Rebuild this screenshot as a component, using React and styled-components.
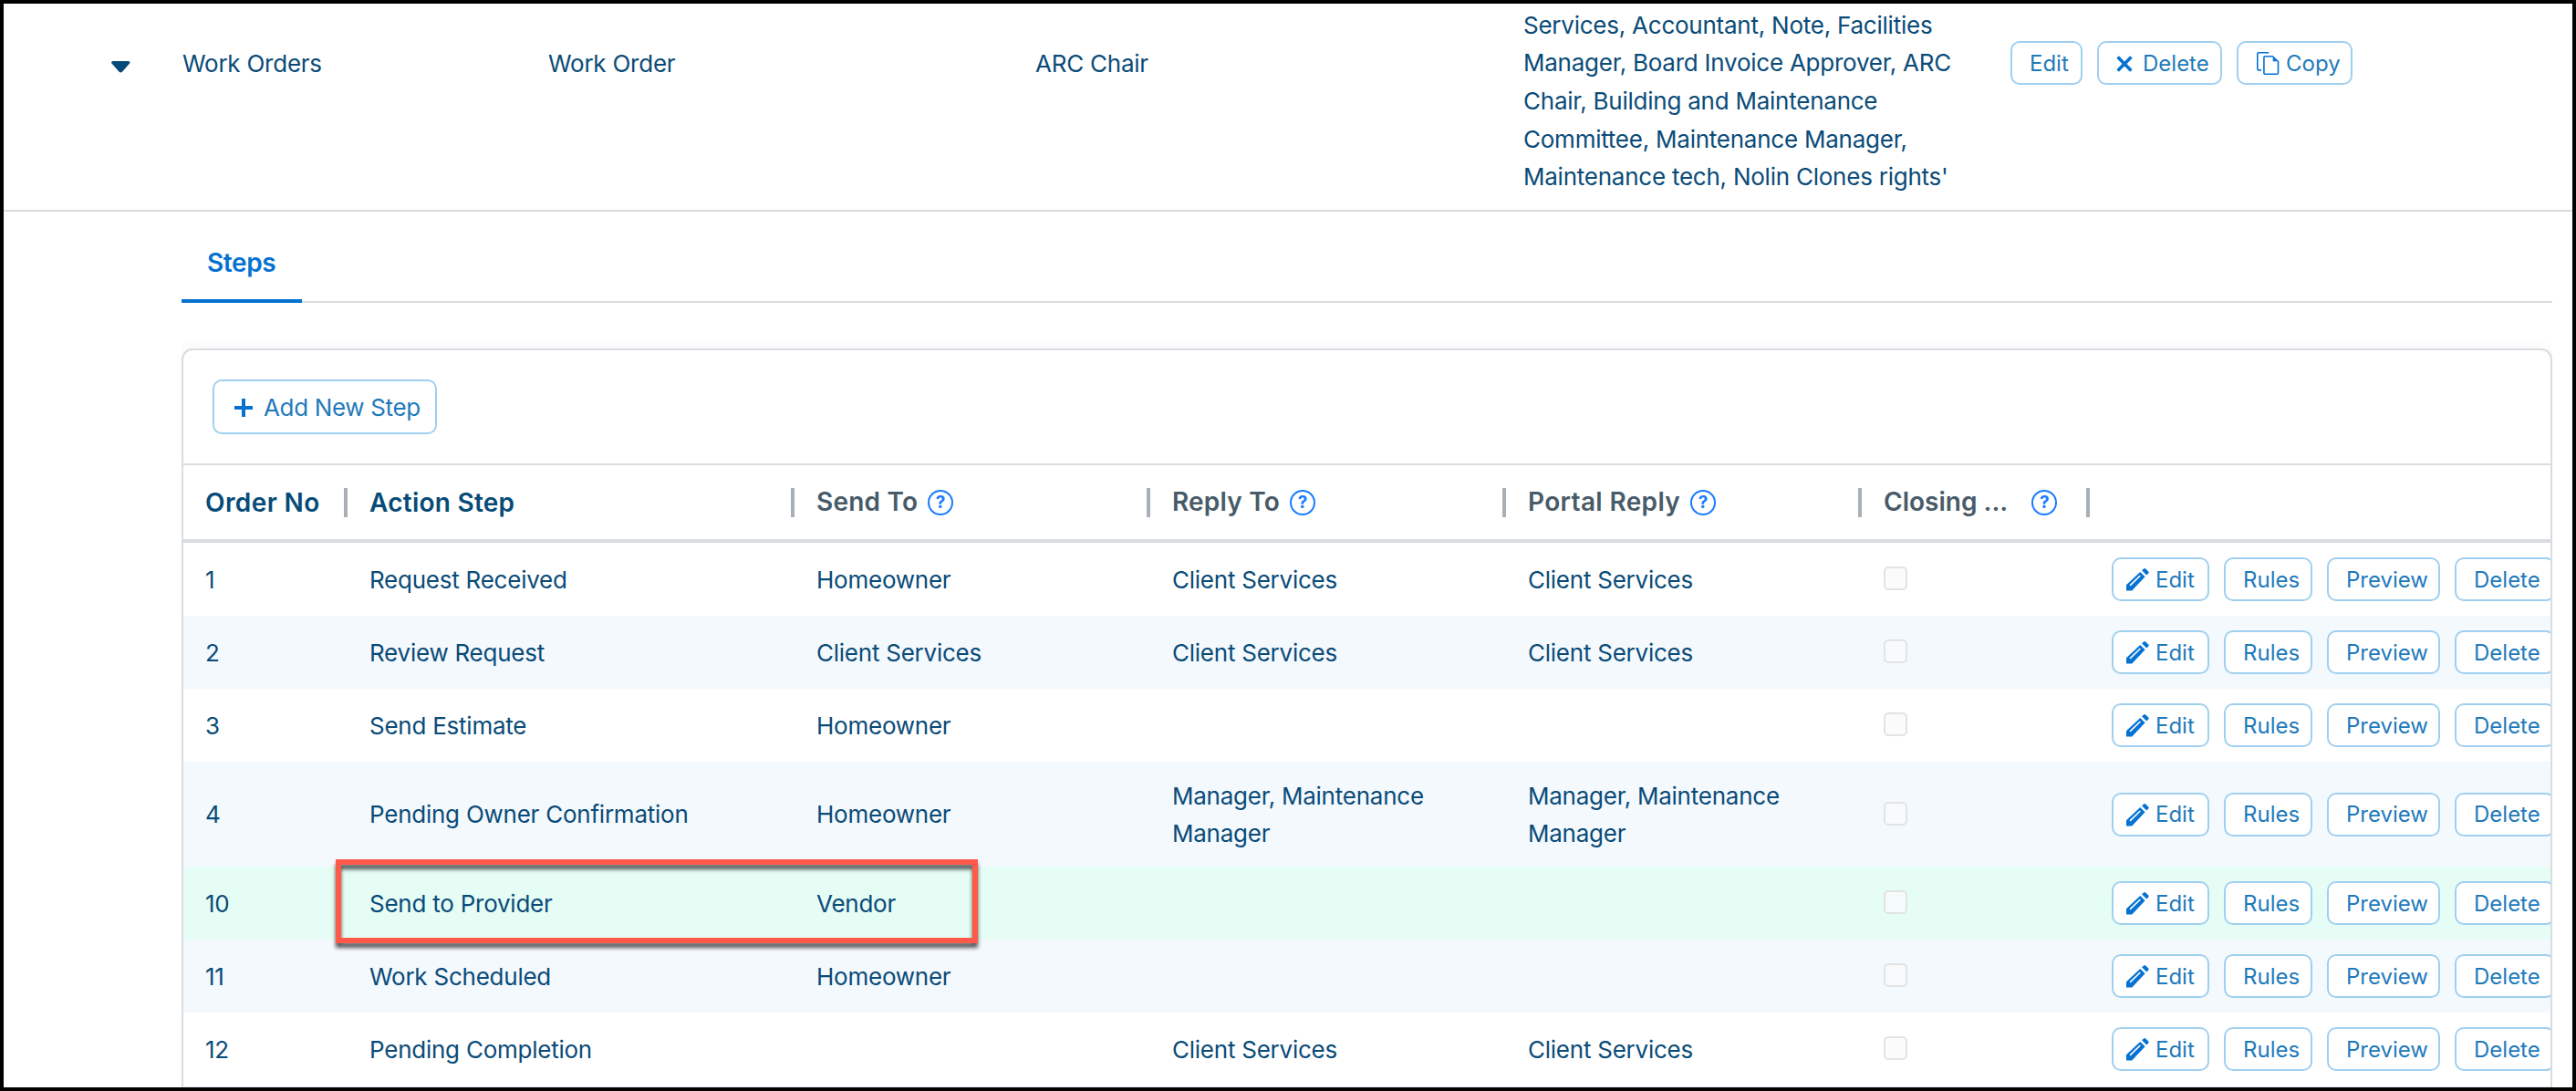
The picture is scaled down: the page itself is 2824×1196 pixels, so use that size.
import React from "react";
import styled, { createGlobalStyle, css } from "styled-components";

const colors = {
  text: "#0a4b78",
  heading: "#064b78",
  muted: "#485b68",
  link: "#1f7abb",
  primary: "#0572d2",
  line: "#d9dde1",
  outline: "#a0d0ef",
  stripe: "#f4f9fe",
  active: "#e5fdf5",
};

const GlobalStyle = createGlobalStyle`
  * { box-sizing: border-box; }
  body {
    margin: 0;
    background: #fff;
    font-family: Inter, "Liberation Sans", sans-serif;
  }
`;

const Frame = styled.main`
  position: relative;
  width: 2824px;
  height: 1196px;
  border: 4px solid #000;
  background: #fff;
  overflow: hidden;
  color: ${colors.text};
  font-size: 26px;
  line-height: 41.6px;
  letter-spacing: -0.24px;
`;

const WorkflowRow = styled.section`
  display: grid;
  grid-template-columns: 195px 401px 534px 535px 535px 1fr;
  height: 228px;
  border-bottom: 2px solid ${colors.line};
`;

const WorkflowCell = styled.div`
  padding: 44.5px 0 0 1px;
`;

const Roles = styled.div`
  width: 490px;
  padding: 2.8px 0 0 1px;
`;

const ExpandButton = styled.div`
  padding: 63px 0 0 118px;
  line-height: 0;
`;

const WorkflowActions = styled.div`
  display: flex;
  align-items: flex-start;
  gap: 16px;
  padding-top: 41px;
`;

const Button = styled.button`
  flex: none;
  display: flex;
  align-items: center;
  gap: ${(p) => p.$gap || 7}px;
  width: ${(p) => p.$width}px;
  height: 48px;
  padding: 1px 0 0 ${(p) => p.$inset || 19}px;
  border: 2px solid ${colors.outline};
  border-radius: 10px;
  background: #fff;
  color: ${colors.link};
  font: 400 24px/30px Inter, "Liberation Sans", sans-serif;
  letter-spacing: 0;
  white-space: nowrap;

  ${(p) =>
    p.$large &&
    css`
      height: 60px;
      font-size: 26px;
      letter-spacing: -0.35px;
    `}

  svg { flex: none; }
`;

const Detail = styled.section`
  width: 2599px;
  margin-left: 195px;
  overflow: hidden;
`;

const Tabs = styled.nav`
  display: flex;
  height: 100px;
  border-bottom: 2px solid ${colors.line};
`;

const Tab = styled.div`
  width: 132px;
  height: 100px;
  padding: 36px 0 0 28px;
  border-bottom: 4px solid ${colors.primary};
  color: ${colors.primary};
  font-size: 28px;
  font-weight: 600;
  letter-spacing: -0.4px;
`;

const Panel = styled.div`
  padding-top: 50px;
  overflow: hidden;
`;

const Card = styled.div`
  height: 900px;
  border: 2px solid ${colors.line};
  border-radius: 12px;
  background: #fff;
  overflow: hidden;
  box-shadow: 0 0 16px rgba(0, 0, 0, 0.06);
`;

const Toolbar = styled.div`
  height: 126px;
  padding: 32px;
  border-bottom: 2px solid ${colors.line};
`;

const columns = css`
  display: grid;
  grid-template-columns: 180px 490px 390px 390px 390px 250px 1fr;
`;

const HeaderRow = styled.div`
  ${columns}
  height: 85px;
  border-bottom: 4px solid ${colors.line};
`;

const HeaderCell = styled.div`
  display: flex;
  align-items: center;
  padding-left: 24px;
  color: ${(p) => (p.$muted ? colors.muted : colors.heading)};
  font-size: 28px;
  font-weight: 600;
  letter-spacing: ${(p) => p.$tracking || 0.2}px;
  white-space: nowrap;
`;

const HeaderLabel = styled.span`
  padding-top: ${(p) => (p.$muted ? 1 : 3)}px;
`;

const Divider = styled.span`
  width: 4px;
  height: 32px;
  margin-left: auto;
  background: #a8b0b7;
`;

const Help = styled.span`
  display: flex;
  align-items: center;
  justify-content: center;
  width: 28px;
  height: 28px;
  margin-left: ${(p) => p.$offset}px;
  border: 2px solid #1a7cff;
  border-radius: 50%;
  color: #1a7cff;
  font-size: 19px;
  font-weight: 700;
  line-height: 24px;
  letter-spacing: 0;
`;

const StepRow = styled.div`
  ${columns}
  min-height: 80px;
  background: ${(p) => (p.$active ? colors.active : p.$striped ? colors.stripe : "#fff")};
`;

const Cell = styled.div`
  display: flex;
  align-items: center;
  min-width: 0;
  padding: 16.5px 16px 15.5px 24px;
`;

const ControlCell = styled(Cell)`
  gap: 16px;
  padding-top: 16px;
  padding-bottom: 16px;
`;

const Checkbox = styled.span`
  width: 26px;
  height: 26px;
  margin-bottom: 2px;
  border: 2px solid #e2e3e4;
  border-radius: 5px;
  background: rgba(250, 250, 251, 0.75);
`;

const Highlight = styled.div`
  position: absolute;
  left: 364px;
  top: 938px;
  width: 704px;
  height: 92px;
  border: 6px solid #ff5a49;
  filter: drop-shadow(0 5px 2px rgba(0, 0, 0, 0.65));
`;

const CaretIcon = () => (
  <svg width="21" height="13" viewBox="0 0 21 13">
    <path d="M1.8 0H18.8C20.4 0 20.9 1.8 19.9 2.8L12 11.7C11 12.8 9.6 12.8 8.6 11.7L.7 2.8C-.3 1.8 .2 0 1.8 0Z" fill={colors.heading} />
  </svg>
);

const PencilIcon = () => (
  <svg width="25" height="25" viewBox="0 0 25 25">
    <path d="M0 24.5V18.3L15.2 3.9L20.6 9.2L6.2 24.5Z" fill={colors.primary} />
    <path d="M4 18.9L15.3 8" stroke="#fff" strokeWidth="1.6" fill="none" />
    <path d="M17 2.3L19.2 .5Q20.2 -.3 21.2 .6L24.2 3.6Q25.1 4.6 24.3 5.5L22.2 7.6Z" fill={colors.primary} />
  </svg>
);

const CloseIcon = () => (
  <svg width="18" height="18" viewBox="0 0 18 18">
    <path d="M1.6 1.6L16.4 16.4M16.4 1.6L1.6 16.4" stroke={colors.primary} strokeWidth="3.6" />
  </svg>
);

const CopyIcon = () => (
  <svg width="25" height="25" viewBox="0 0 25 25" fill="none" stroke={colors.primary} strokeWidth="1.6">
    <path d="M13.2 .8H2Q.8 .8 .8 2V18.7Q.8 19.9 2 19.9H5" />
    <path d="M18 4.8H9Q7.9 4.8 7.9 5.9V23Q7.9 24.2 9 24.2H22.3Q23.5 24.2 23.5 23V10" />
    <path d="M17.7 4V10.2H24.3Z" fill={colors.primary} stroke="none" />
  </svg>
);

const PlusIcon = () => (
  <svg width="20" height="20" viewBox="0 0 20 20">
    <path d="M8 0H12V8H20V12H12V20H8V12H0V8H8Z" fill={colors.primary} />
  </svg>
);

const headers = [
  { label: "Order No", tracking: 0.4 },
  { label: "Action Step", tracking: 0.25 },
  { label: "Send To", muted: true, help: 11, tracking: 0.2 },
  { label: "Reply To", muted: true, help: 11, tracking: 0.2 },
  { label: "Portal Reply", muted: true, help: 11, tracking: 0.35 },
  { label: "Closing ...", muted: true, help: 26, tracking: 0.01 },
];

const steps = [
  { no: 1, action: "Request Received", send: "Homeowner", reply: "Client Services", portal: "Client Services" },
  { no: 2, action: "Review Request", send: "Client Services", reply: "Client Services", portal: "Client Services", striped: true },
  { no: 3, action: "Send Estimate", send: "Homeowner" },
  { no: 4, action: "Pending Owner Confirmation", send: "Homeowner", reply: "Manager, Maintenance Manager", portal: "Manager, Maintenance Manager", striped: true },
  { no: 10, action: "Send to Provider", send: "Vendor", active: true },
  { no: 11, action: "Work Scheduled", send: "Homeowner", striped: true },
  { no: 12, action: "Pending Completion", reply: "Client Services", portal: "Client Services" },
];

function Step({ step }) {
  return (
    <StepRow $striped={step.striped} $active={step.active}>
      <Cell>{step.no}</Cell>
      <Cell>{step.action}</Cell>
      <Cell>{step.send}</Cell>
      <Cell>{step.reply}</Cell>
      <Cell>{step.portal}</Cell>
      <ControlCell><Checkbox /></ControlCell>
      <ControlCell>
        <Button $width={107} $inset={14}><PencilIcon />Edit</Button>
        <Button $width={97}>Rules</Button>
        <Button $width={124}>Preview</Button>
        <Button $width={110}>Delete</Button>
      </ControlCell>
    </StepRow>
  );
}

export default function App() {
  return (
    <>
      <GlobalStyle />
      <Frame>
        <WorkflowRow>
          <ExpandButton><CaretIcon /></ExpandButton>
          <WorkflowCell>Work Orders</WorkflowCell>
          <WorkflowCell>Work Order</WorkflowCell>
          <WorkflowCell>ARC Chair</WorkflowCell>
          <Roles>
            Services, Accountant, Note, Facilities Manager, Board Invoice Approver, ARC Chair, Building and
            Maintenance Committee, Maintenance Manager, Maintenance tech, Nolin Clones rights'
          </Roles>
          <WorkflowActions>
            <Button $width={79}>Edit</Button>
            <Button $width={137} $gap={11}><CloseIcon />Delete</Button>
            <Button $width={127} $inset={20}><CopyIcon />Copy</Button>
          </WorkflowActions>
        </WorkflowRow>

        <Detail>
          <Tabs>
            <Tab>Steps</Tab>
          </Tabs>
          <Panel>
            <Card>
              <Toolbar>
                <Button $large $width={246} $inset={22} $gap={12}><PlusIcon />Add New Step</Button>
              </Toolbar>
              <HeaderRow>
                {headers.map((h) => (
                  <HeaderCell key={h.label} $muted={h.muted} $tracking={h.tracking}>
                    <HeaderLabel $muted={h.muted}>{h.label}</HeaderLabel>
                    {h.help && <Help $offset={h.help}>?</Help>}
                    <Divider />
                  </HeaderCell>
                ))}
              </HeaderRow>
              {steps.map((s) => <Step key={s.no} step={s} />)}
              <StepRow $striped />
            </Card>
          </Panel>
        </Detail>

        <Highlight />
      </Frame>
    </>
  );
}
